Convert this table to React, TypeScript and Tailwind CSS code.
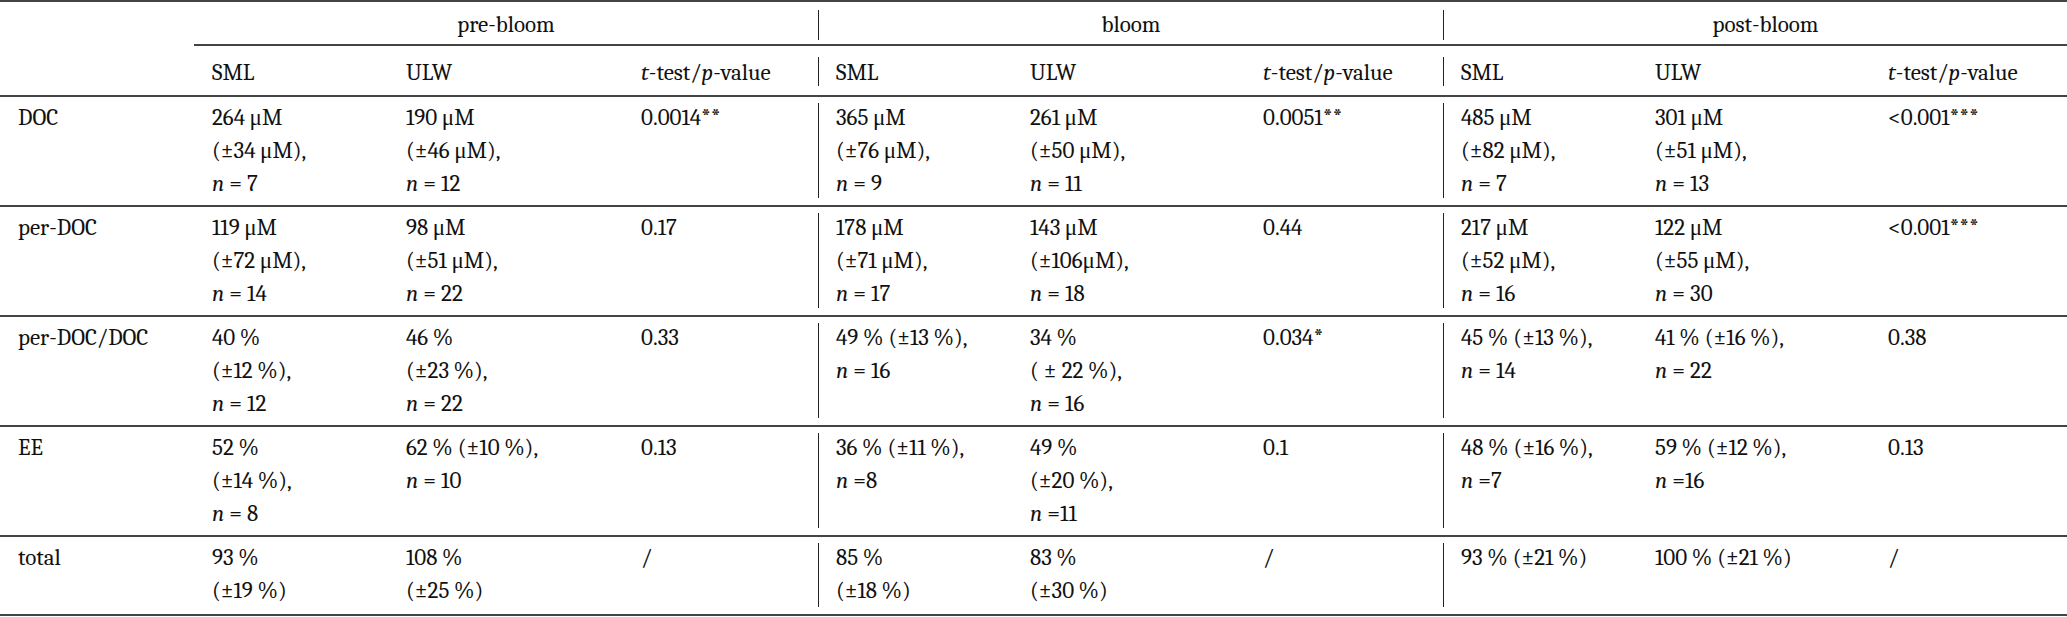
type Lines = string[];

const cols =
  "grid grid-cols-[194px_194px_235px_195px_194px_233px_198px_194px_233px_197px]";

const groups = ["pre-bloom", "bloom", "post-bloom"];

const rows: { label: string; cells: Lines[] }[] = [
  {
    label: "DOC",
    cells: [
      ["264\u2009μM", "(±34\u2009μM),", "n = 7"],
      ["190\u2009μM", "(±46\u2009μM),", "n = 12"],
      ["0.0014**"],
      ["365\u2009μM", "(±76\u2009μM),", "n = 9"],
      ["261\u2009μM", "(±50\u2009μM),", "n = 11"],
      ["0.0051**"],
      ["485\u2009μM", "(±82\u2009μM),", "n = 7"],
      ["301\u2009μM", "(±51\u2009μM),", "n = 13"],
      ["<0.001***"],
    ],
  },
  {
    label: "per-DOC",
    cells: [
      ["119\u2009μM", "(±72\u2009μM),", "n = 14"],
      ["98\u2009μM", "(±51\u2009μM),", "n = 22"],
      ["0.17"],
      ["178\u2009μM", "(±71\u2009μM),", "n = 17"],
      ["143\u2009μM", "(±106μM),", "n = 18"],
      ["0.44"],
      ["217\u2009μM", "(±52\u2009μM),", "n = 16"],
      ["122\u2009μM", "(±55\u2009μM),", "n = 30"],
      ["<0.001***"],
    ],
  },
  {
    label: "per-DOC/DOC",
    cells: [
      ["40\u2009%", "(±12\u2009%),", "n = 12"],
      ["46\u2009%", "(±23\u2009%),", "n = 22"],
      ["0.33"],
      ["49\u2009% (±13\u2009%),", "n = 16"],
      ["34\u2009%", "( ± 22\u2009%),", "n = 16"],
      ["0.034*"],
      ["45\u2009% (±13\u2009%),", "n = 14"],
      ["41\u2009% (±16\u2009%),", "n = 22"],
      ["0.38"],
    ],
  },
  {
    label: "EE",
    cells: [
      ["52\u2009%", "(±14\u2009%),", "n = 8"],
      ["62\u2009% (±10\u2009%),", "n = 10"],
      ["0.13"],
      ["36\u2009% (±11\u2009%),", "n =8"],
      ["49\u2009%", "(±20\u2009%),", "n =11"],
      ["0.1"],
      ["48\u2009% (±16\u2009%),", "n =7"],
      ["59\u2009% (±12\u2009%),", "n =16"],
      ["0.13"],
    ],
  },
  {
    label: "total",
    cells: [
      ["93\u2009%", "(±19\u2009%)"],
      ["108\u2009%", "(±25\u2009%)"],
      ["/"],
      ["85\u2009%", "(±18\u2009%)"],
      ["83\u2009%", "(±30\u2009%)"],
      ["/"],
      ["93\u2009% (±21\u2009%)"],
      ["100\u2009% (±21\u2009%)"],
      ["/"],
    ],
  },
];

const Line = ({ text }: { text: string }) =>
  text.startsWith("n ") || text.startsWith("n=") ? (
    <div>
      <span className="italic">n</span>
      {text.slice(1)}
    </div>
  ) : (
    <div>{text}</div>
  );

const TTest = () => (
  <>
    <span className="italic">t</span>-test/<span className="italic">p</span>-value
  </>
);

const DataCell = ({ lines, bar, last }: { lines: Lines; bar: boolean; last: boolean }) => {
  const pad = last ? "pt-[4px] pb-[7px]" : "pt-[4px] pb-[5px]";
  const body = lines.map((l, i) => <Line key={i} text={l} />);
  if (bar) {
    return (
      <div className="flex">
        <div className="w-px bg-[#222] mt-[6px] mb-[7px]" />
        <div className={`pl-[17px] ${pad}`}>{body}</div>
      </div>
    );
  }
  return <div className={`pl-[18px] ${pad}`}>{body}</div>;
};

export default function App() {
  return (
    <div className="w-[2067px] bg-white text-[#111] text-[23px] leading-[33px] font-serif">
      <div className="border-t-2 border-[#444]">
        {/* group headers */}
        <div className={cols}>
          <div />
          {groups.map((g, i) =>
            i === 0 ? (
              <div key={g} className="col-span-3 h-[44px] border-b-2 border-[#444] pt-[6px] text-center">
                {g}
              </div>
            ) : (
              <div key={g} className="col-span-3 h-[44px] border-b-2 border-[#444] flex">
                <div className="w-px bg-[#222] mt-[8px] mb-[4px]" />
                <div className={`flex-1 pt-[6px] text-center ${i === 2 ? "pl-[20px]" : ""}`}>{g}</div>
              </div>
            )
          )}
        </div>

        {/* column headers */}
        <div className={`${cols} border-b-2 border-[#444]`}>
          <div className="h-[49px]" />
          {groups.map((g, i) => (
            <div key={g} className="contents">
              {i === 0 ? (
                <div className="pl-[18px] pt-[10px]">SML</div>
              ) : (
                <div className="flex">
                  <div className="w-px bg-[#222] mt-[11px] mb-[9px]" />
                  <div className="pl-[17px] pt-[10px]">SML</div>
                </div>
              )}
              <div className="pl-[18px] pt-[10px]">ULW</div>
              <div className="pl-[18px] pt-[10px]">
                <TTest />
              </div>
            </div>
          ))}
        </div>

        {/* data rows */}
        {rows.map((r, ri) => {
          const last = ri === rows.length - 1;
          return (
            <div key={r.label} className={`${cols} border-b-2 border-[#444]`}>
              <div className={`pl-[18px] ${last ? "pt-[4px] pb-[7px]" : "pt-[4px] pb-[5px]"}`}>{r.label}</div>
              {r.cells.map((c, ci) => (
                <DataCell key={ci} lines={c} bar={ci === 3 || ci === 6} last={last} />
              ))}
            </div>
          );
        })}
      </div>
    </div>
  );
}
